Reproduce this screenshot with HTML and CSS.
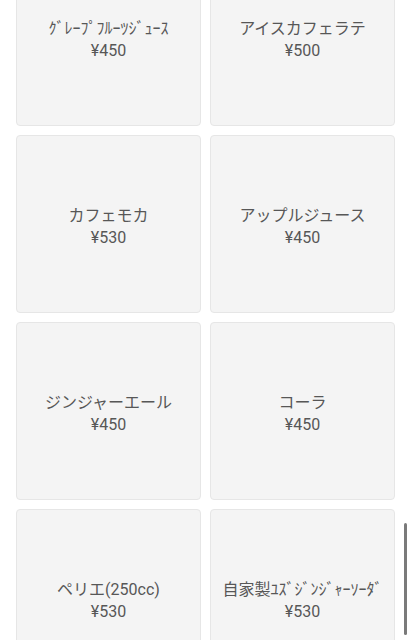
FILE: index.html
```html
<!DOCTYPE html>
<html lang="ja">
<head>
<meta charset="UTF-8">
<meta name="viewport" content="width=device-width, initial-scale=1.0">
<title>メニュー</title>
<link rel="stylesheet" href="styles.css">
</head>
<body>

<div class="menu">
    <div class="item"><span class="name">ｸﾞﾚｰﾌﾟﾌﾙｰﾂｼﾞｭｰｽ</span><span class="price">¥450</span></div>
    <div class="item"><span class="name">アイスカフェラテ</span><span class="price">¥500</span></div>
    <div class="item"><span class="name">カフェモカ</span><span class="price">¥530</span></div>
    <div class="item"><span class="name">アップルジュース</span><span class="price">¥450</span></div>
    <div class="item"><span class="name">ジンジャーエール</span><span class="price">¥450</span></div>
    <div class="item"><span class="name">コーラ</span><span class="price">¥450</span></div>
    <div class="item"><span class="name">ペリエ(250cc)</span><span class="price">¥530</span></div>
    <div class="item"><span class="name">自家製ﾕｽﾞｼﾞﾝｼﾞｬｰｿｰﾀﾞ</span><span class="price">¥530</span></div>
</div>

<div class="scrollbar"></div>

</body>
</html>
```

FILE: styles.css
```css
body {
    font-family: Roboto, "Noto Sans CJK JP", sans-serif;
    background-color: #fff;
    margin: 0;
    height: 640px;
    overflow: hidden;
}
.menu {
    display: grid;
    grid-template-columns: 1fr 1fr;
    gap: 9px;
    padding: 0 16px;
    margin-top: -52px;
}
.item {
    height: 178px;
    box-sizing: border-box;
    padding-top: 6px;
    background-color: #f4f4f4;
    border: 1px solid #e6e6e6;
    border-radius: 4px;
    display: flex;
    flex-direction: column;
    justify-content: center;
    align-items: center;
    color: #575757;
    font-size: 16px;
    line-height: 22px;
}
.scrollbar {
    position: fixed;
    right: 4px;
    top: 523px;
    width: 3px;
    height: 112px;
    background-color: #7a7a7a;
    border-radius: 2px;
}
```
